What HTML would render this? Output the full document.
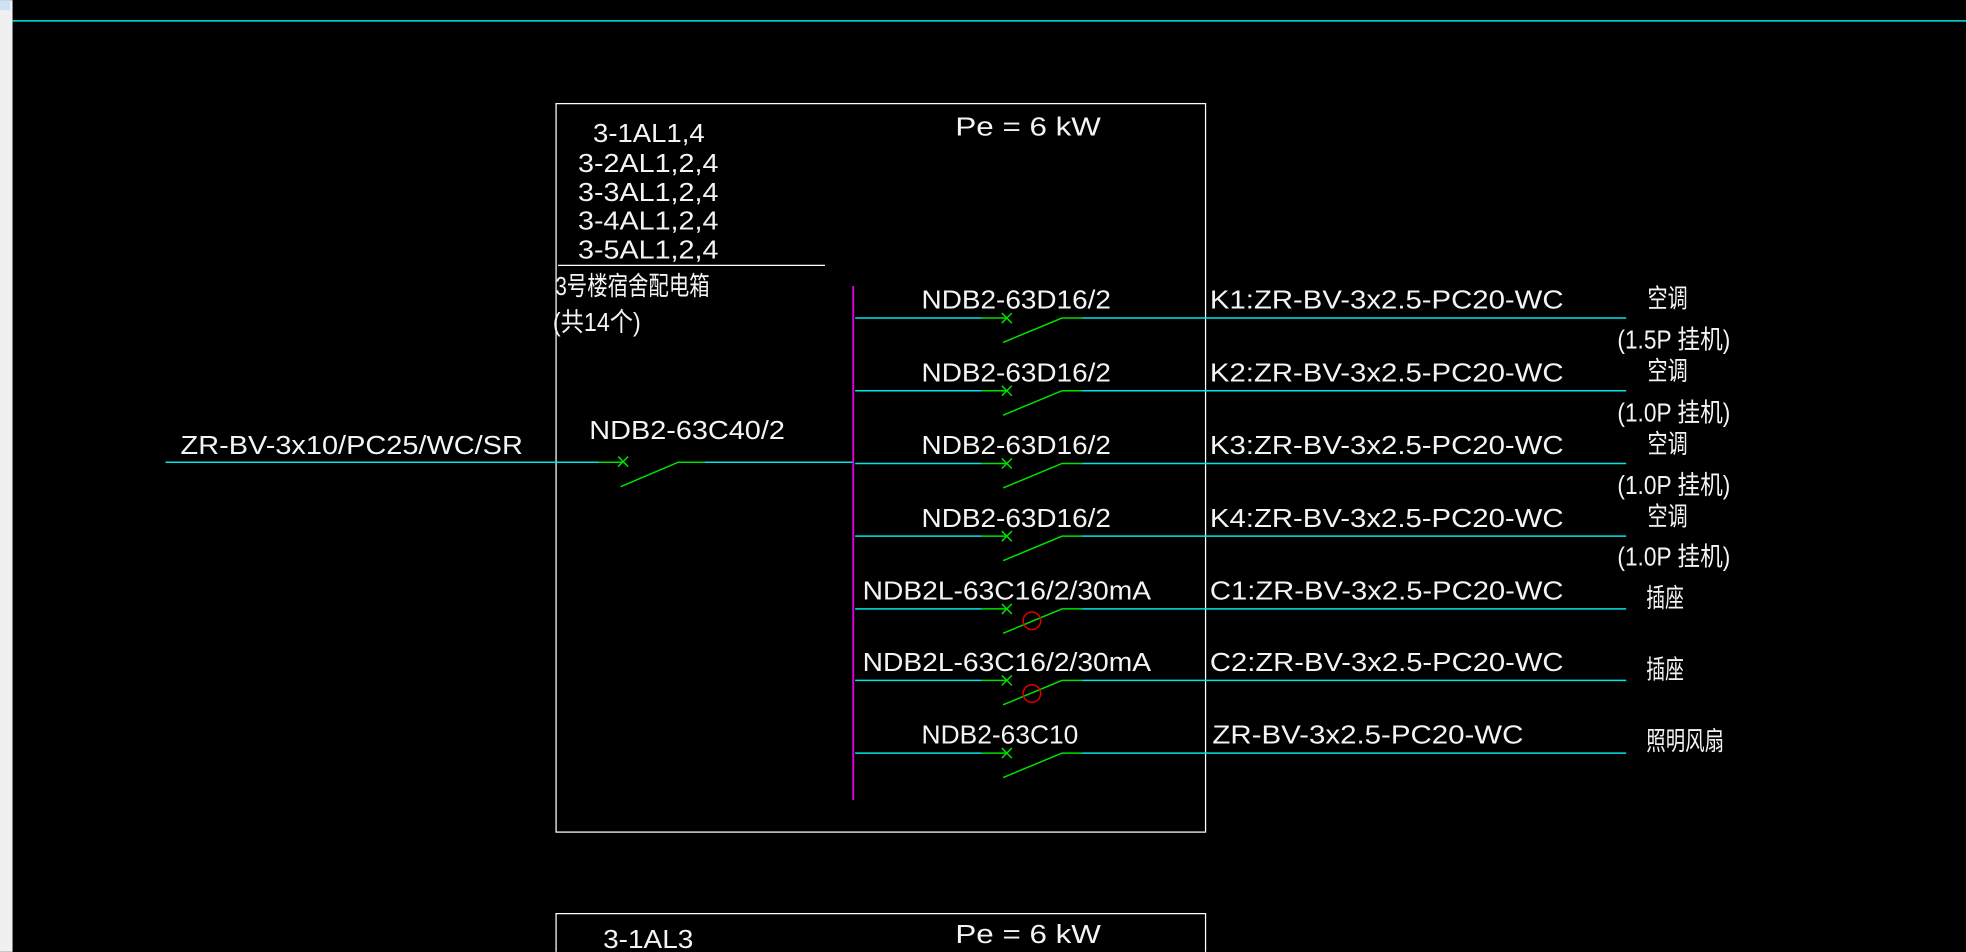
<!DOCTYPE html>
<html><head><meta charset="utf-8"><style>
html,body{margin:0;padding:0;background:#000;overflow:hidden}
svg{display:block}
text{font-family:"DejaVu Sans ExtraLight","Liberation Sans","Noto Sans CJK SC",sans-serif;fill:#f4f4f4;font-size:21px;font-weight:normal}
</style></head><body>
<svg width="1966" height="952" viewBox="0 0 1568 759" xmlns="http://www.w3.org/2000/svg">
<rect x="0" y="0" width="1568" height="759" fill="#000"/>
<rect x="0" y="0" width="10" height="759" fill="#f0f0f0"/>
<rect x="0" y="0" width="8" height="8" fill="#cfe0f5"/>
<line x1="10" y1="16.5" x2="1568" y2="16.5" stroke="#00e5e5" stroke-width="1.2"/>
<g fill="none" stroke="#fff" stroke-width="1">
<rect x="443.5" y="82.5" width="518" height="581"/>
<path d="M443.5 759 V728.5 H961.5 V759"/>
<line x1="445" y1="211.5" x2="658" y2="211.5"/>
</g>
<text x="762" y="108" textLength="116" lengthAdjust="spacingAndGlyphs">Pe = 6 kW</text>
<text x="473" y="113" textLength="89" lengthAdjust="spacingAndGlyphs">3-1AL1,4</text>
<text x="461" y="137" textLength="112" lengthAdjust="spacingAndGlyphs">3-2AL1,2,4</text>
<text x="461" y="160" textLength="112" lengthAdjust="spacingAndGlyphs">3-3AL1,2,4</text>
<text x="461" y="183" textLength="112" lengthAdjust="spacingAndGlyphs">3-4AL1,2,4</text>
<text x="461" y="206" textLength="112" lengthAdjust="spacingAndGlyphs">3-5AL1,2,4</text>
<text x="443" y="235" font-size="18" textLength="123" lengthAdjust="spacingAndGlyphs">3号楼宿舍配电箱</text>
<text x="441" y="264" font-size="18" textLength="70" lengthAdjust="spacingAndGlyphs">(共14个)</text>
<text x="762" y="752" textLength="116" lengthAdjust="spacingAndGlyphs">Pe = 6 kW</text>
<text x="481" y="756" textLength="72" lengthAdjust="spacingAndGlyphs">3-1AL3</text>
<text x="144" y="362" textLength="273" lengthAdjust="spacingAndGlyphs">ZR-BV-3x10/PC25/WC/SR</text>
<text x="470" y="350" textLength="156" lengthAdjust="spacingAndGlyphs">NDB2-63C40/2</text>
<g stroke-width="1.2" fill="none">
<line x1="132" y1="368.5" x2="478" y2="368.5" stroke="#00e5e5"/>
<line x1="478" y1="368.5" x2="497" y2="368.5" stroke="#00e000"/>
<path d="M493 364l8 8M501 364l-8 8" stroke="#00e000"/>
<path d="M495 388 L541 368.5 H562" stroke="#00e000"/>
<line x1="562" y1="368.5" x2="680" y2="368.5" stroke="#00e5e5"/>
<line x1="680.5" y1="228" x2="680.5" y2="638" stroke="#e000e0" stroke-width="1.5"/>
</g>
<g stroke-width="1.2" fill="none">
<g transform="translate(0,253)"><line x1="682" y1=".5" x2="783" y2=".5" stroke="#00e5e5"/><line x1="783" y1=".5" x2="803" y2=".5" stroke="#00e000"/><path d="M799 -3.5l8 8M807 -3.5l-8 8" stroke="#00e000"/><path d="M800 20 L847 .5 H863" stroke="#00e000"/><line x1="863" y1=".5" x2="1297" y2=".5" stroke="#00e5e5"/></g>
<g transform="translate(0,311)"><line x1="682" y1=".5" x2="783" y2=".5" stroke="#00e5e5"/><line x1="783" y1=".5" x2="803" y2=".5" stroke="#00e000"/><path d="M799 -3.5l8 8M807 -3.5l-8 8" stroke="#00e000"/><path d="M800 20 L847 .5 H863" stroke="#00e000"/><line x1="863" y1=".5" x2="1297" y2=".5" stroke="#00e5e5"/></g>
<g transform="translate(0,369)"><line x1="682" y1=".5" x2="783" y2=".5" stroke="#00e5e5"/><line x1="783" y1=".5" x2="803" y2=".5" stroke="#00e000"/><path d="M799 -3.5l8 8M807 -3.5l-8 8" stroke="#00e000"/><path d="M800 20 L847 .5 H863" stroke="#00e000"/><line x1="863" y1=".5" x2="1297" y2=".5" stroke="#00e5e5"/></g>
<g transform="translate(0,427)"><line x1="682" y1=".5" x2="783" y2=".5" stroke="#00e5e5"/><line x1="783" y1=".5" x2="803" y2=".5" stroke="#00e000"/><path d="M799 -3.5l8 8M807 -3.5l-8 8" stroke="#00e000"/><path d="M800 20 L847 .5 H863" stroke="#00e000"/><line x1="863" y1=".5" x2="1297" y2=".5" stroke="#00e5e5"/></g>
<g transform="translate(0,485)"><line x1="682" y1=".5" x2="783" y2=".5" stroke="#00e5e5"/><line x1="783" y1=".5" x2="803" y2=".5" stroke="#00e000"/><path d="M799 -3.5l8 8M807 -3.5l-8 8" stroke="#00e000"/><path d="M800 20 L847 .5 H863" stroke="#00e000"/><line x1="863" y1=".5" x2="1297" y2=".5" stroke="#00e5e5"/><circle cx="823" cy="10" r="7" stroke="#e00000"/></g>
<g transform="translate(0,542)"><line x1="682" y1=".5" x2="783" y2=".5" stroke="#00e5e5"/><line x1="783" y1=".5" x2="803" y2=".5" stroke="#00e000"/><path d="M799 -3.5l8 8M807 -3.5l-8 8" stroke="#00e000"/><path d="M800 20 L847 .5 H863" stroke="#00e000"/><line x1="863" y1=".5" x2="1297" y2=".5" stroke="#00e5e5"/><circle cx="823" cy="11" r="7" stroke="#e00000"/></g>
<g transform="translate(0,600)"><line x1="682" y1=".5" x2="783" y2=".5" stroke="#00e5e5"/><line x1="783" y1=".5" x2="803" y2=".5" stroke="#00e000"/><path d="M799 -3.5l8 8M807 -3.5l-8 8" stroke="#00e000"/><path d="M800 20 L847 .5 H863" stroke="#00e000"/><line x1="863" y1=".5" x2="1297" y2=".5" stroke="#00e5e5"/></g>
</g>
<text x="735" y="246" textLength="151" lengthAdjust="spacingAndGlyphs">NDB2-63D16/2</text>
<text x="735" y="304" textLength="151" lengthAdjust="spacingAndGlyphs">NDB2-63D16/2</text>
<text x="735" y="362" textLength="151" lengthAdjust="spacingAndGlyphs">NDB2-63D16/2</text>
<text x="735" y="420" textLength="151" lengthAdjust="spacingAndGlyphs">NDB2-63D16/2</text>
<text x="688" y="478" textLength="230" lengthAdjust="spacingAndGlyphs">NDB2L-63C16/2/30mA</text>
<text x="688" y="535" textLength="230" lengthAdjust="spacingAndGlyphs">NDB2L-63C16/2/30mA</text>
<text x="735" y="593" textLength="125" lengthAdjust="spacingAndGlyphs">NDB2-63C10</text>
<text x="965" y="246" textLength="282" lengthAdjust="spacingAndGlyphs">K1:ZR-BV-3x2.5-PC20-WC</text>
<text x="965" y="304" textLength="282" lengthAdjust="spacingAndGlyphs">K2:ZR-BV-3x2.5-PC20-WC</text>
<text x="965" y="362" textLength="282" lengthAdjust="spacingAndGlyphs">K3:ZR-BV-3x2.5-PC20-WC</text>
<text x="965" y="420" textLength="282" lengthAdjust="spacingAndGlyphs">K4:ZR-BV-3x2.5-PC20-WC</text>
<text x="965" y="478" textLength="282" lengthAdjust="spacingAndGlyphs">C1:ZR-BV-3x2.5-PC20-WC</text>
<text x="965" y="535" textLength="282" lengthAdjust="spacingAndGlyphs">C2:ZR-BV-3x2.5-PC20-WC</text>
<text x="967" y="593" textLength="248" lengthAdjust="spacingAndGlyphs">ZR-BV-3x2.5-PC20-WC</text>
<text x="1314" y="245" font-size="18" textLength="32" lengthAdjust="spacingAndGlyphs">空调</text>
<text x="1290" y="278" font-size="18" textLength="90" lengthAdjust="spacingAndGlyphs">(1.5P 挂机)</text>
<text x="1314" y="303" font-size="18" textLength="32" lengthAdjust="spacingAndGlyphs">空调</text>
<text x="1290" y="336" font-size="18" textLength="90" lengthAdjust="spacingAndGlyphs">(1.0P 挂机)</text>
<text x="1314" y="361" font-size="18" textLength="32" lengthAdjust="spacingAndGlyphs">空调</text>
<text x="1290" y="394" font-size="18" textLength="90" lengthAdjust="spacingAndGlyphs">(1.0P 挂机)</text>
<text x="1314" y="419" font-size="18" textLength="32" lengthAdjust="spacingAndGlyphs">空调</text>
<text x="1290" y="451" font-size="18" textLength="90" lengthAdjust="spacingAndGlyphs">(1.0P 挂机)</text>
<text x="1313" y="484" font-size="18" textLength="30" lengthAdjust="spacingAndGlyphs">插座</text>
<text x="1313" y="541" font-size="18" textLength="30" lengthAdjust="spacingAndGlyphs">插座</text>
<text x="1313" y="598" font-size="18" textLength="62" lengthAdjust="spacingAndGlyphs">照明风扇</text>
</svg>
</body></html>
